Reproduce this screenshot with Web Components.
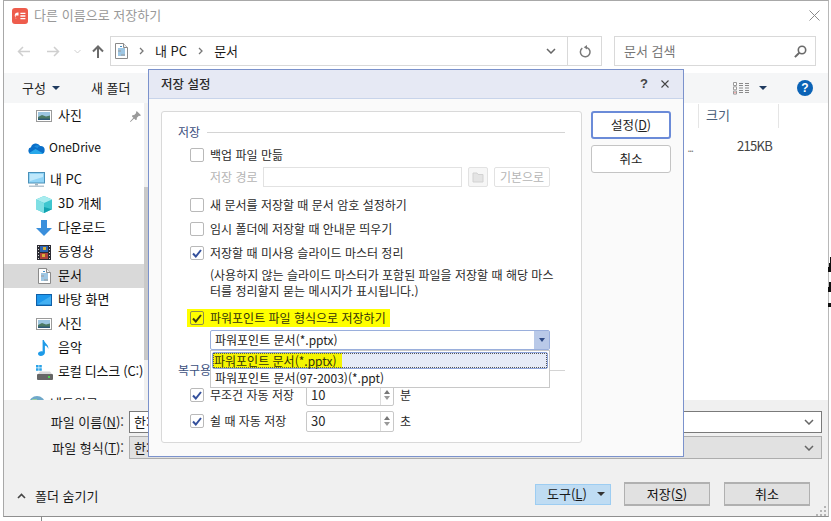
<!DOCTYPE html>
<html lang="ko">
<head>
<meta charset="utf-8">
<title>다른 이름으로 저장하기</title>
<style>
  html, body { margin: 0; padding: 0; background: #fff; overflow: hidden; }
  body { width: 831px; height: 521px; position: relative; font-family: "Noto Sans CJK KR", "Noto Sans", sans-serif; color: #1a1a1a; }
</style>
</head>
<body>
<desk-top>
  <file-window>
    <title-bar slot="title">다른 이름으로 저장하기</title-bar>
    <address-bar slot="address"></address-bar>
    <tool-bar slot="tools"></tool-bar>
    <nav-pane slot="nav">
      <nav-item icon="picture" pin>사진</nav-item>
      <nav-item icon="cloud" root gap style="font-size:12px;gap:4px">OneDrive</nav-item>
      <nav-item icon="pc" root gap>내 PC</nav-item>
      <nav-item icon="cube">3D 개체</nav-item>
      <nav-item icon="down">다운로드</nav-item>
      <nav-item icon="film">동영상</nav-item>
      <nav-item icon="doc" selected>문서</nav-item>
      <nav-item icon="desktop">바탕 화면</nav-item>
      <nav-item icon="picture">사진</nav-item>
      <nav-item icon="music">음악</nav-item>
      <nav-item icon="disk" style="letter-spacing:-.25px">로컬 디스크 (C:)</nav-item>
      <nav-item icon="globe" root gap>네트워크</nav-item>
    </nav-pane>
    <file-list slot="files"></file-list>
    <file-footer slot="footer"></file-footer>
    <save-dialog slot="dialog"></save-dialog>
  </file-window>
</desk-top>

<script>
const ICONS = {
  app: '<svg width="16" height="16" viewBox="0 0 16 16"><rect width="16" height="16" rx="3" fill="#ee5c4c"/><path d="M6.5 4.6A3 3 0 1 0 6.5 10.4H3.6V7.5H6.5z" fill="#fff"/><path d="M8.4 5.4h5M8.4 8h5M8.4 10.6h5" stroke="#fff" stroke-width="1.3"/></svg>',
  picture: '<svg width="16" height="13" viewBox="0 0 16 13"><rect x=".5" y=".5" width="15" height="11" fill="#fff" stroke="#9a9a9a"/><rect x="2" y="2" width="12" height="8" fill="#9cc6e0"/><path d="M2 7l4-2 4 1.5 4-1V10H2z" fill="#4c7a63"/><path d="M2 8.5h12V10H2z" fill="#2e5a78"/></svg>',
  cloud: '<svg width="17" height="12" viewBox="0 0 17 12"><path d="M3.6 12A3.4 3.4 0 0 1 3 5.3 4.9 4.9 0 0 1 12.1 4 3.9 3.9 0 0 1 16.6 8.5 3.4 3.4 0 0 1 13.5 12z" fill="#0a6fc9"/><path d="M6.2 4.6A4.9 4.9 0 0 1 12.1 4 4 4 0 0 0 9.5 6.2z" fill="#1c8bdc"/><path d="M3.6 12A3.4 3.4 0 0 1 1.2 11L7.5 7l7.8 4.6a3 3 0 0 1-1.8.4z" fill="#28a8ea"/></svg>',
  pc: '<svg width="17" height="16" viewBox="0 0 17 16"><rect x=".5" y=".5" width="16" height="10.5" fill="#8fd3f6" stroke="#4a90b8"/><path d="M2 2h13v3L2 9z" fill="#bfe8fb"/><rect x="7" y="11.5" width="3" height="2" fill="#9fb4c0"/><rect x="1" y="13.5" width="15" height="1.5" fill="#b4c4cf"/></svg>',
  cube: '<svg width="16" height="17" viewBox="0 0 16 17"><path d="M8 0l8 3.6v9.6L8 17 0 13.2V3.6z" fill="#3ec6cf"/><path d="M8 0l8 3.6L8 7 0 3.6z" fill="#a8ecef"/><path d="M0 3.6L8 7v10L0 13.2z" fill="#7fdfe4"/><path d="M8 11l8 2.2L8 17z" fill="#12a3b0"/></svg>',
  down: '<svg width="16" height="16" viewBox="0 0 16 16"><path d="M5 0h6v8h5l-8 8-8-8h5z" fill="#3a8fdc"/></svg>',
  film: '<svg width="14" height="15" viewBox="0 0 14 15"><rect width="14" height="15" fill="#2b2b33"/><rect x="3" y="1" width="8" height="6" fill="#2e64b0"/><rect x="3" y="8" width="8" height="6" fill="#b0443c"/><rect x="6" y="2" width="3" height="3" fill="#d8b23c"/><rect x="5" y="9" width="3" height="3" fill="#d8b23c"/><path d="M1 1.5h1M1 4.5h1M1 7.5h1M1 10.5h1M1 13.5h1M12 1.5h1M12 4.5h1M12 7.5h1M12 10.5h1M12 13.5h1" stroke="#ddd"/></svg>',
  doc: '<svg width="13" height="16" viewBox="0 0 13 16"><path d="M.5.5h8l4 4v11H.5z" fill="#fff" stroke="#8a8a8a"/><path d="M8.5.5v4h4" fill="#eee" stroke="#8a8a8a"/><path d="M5 3.5h2M3 6h7M3 8h7M3 10h7M3 12h7" stroke="#3f8fc9"/><path d="M3 8h3M6 12h4" stroke="#999"/></svg>',
  desktop: '<svg width="16" height="12" viewBox="0 0 16 12"><rect width="16" height="12" fill="#0f5fa8"/><rect x="1" y="1" width="14" height="9.4" fill="#1e98ec"/><path d="M1 10.4L15 2v8.4z" fill="#44b0f2"/></svg>',
  music: '<svg width="12" height="16" viewBox="0 0 12 16"><path d="M4.6 0h1.3c.3 3 5 4.400 4.400 9-.5-2.200-2-3.300-3.400-3.600v7.400C6.900 14.800 4.800 16 2.800 16 1 16 0 15 0 13.800c0-1.600 2.300-3 4.600-2.400z" fill="#1e9be8"/></svg>',
  disk: '<svg width="17" height="15" viewBox="0 0 17 15"><path d="M0 0h2.600v2.600H0zM3.200 0h2.600v2.600H3.200zM0 3.200h2.600v2.600H0zM3.200 3.200h2.600v2.600H3.200z" fill="#2aa3e8"/><path d="M2 9l2-2.500h10L16 9z" fill="#d8d8d8"/><rect x="1" y="9" width="16" height="6" rx="1" fill="#666"/><rect x="12" y="11" width="2" height="2" fill="#4ed04e"/></svg>',
  globe: '<svg width="16" height="16" viewBox="0 0 16 16"><circle cx="8" cy="8" r="8" fill="#6fa8c9"/><path d="M3 3h5v4H4z" fill="#9ad0a0"/></svg>',
  pin: '<svg width="11" height="11" viewBox="0 0 11 11"><path d="M6.700 0L11 4.300 9.800 5 8.900 4.800 6.900 6.800 6.700 8.700 5.600 9 2 5.400 2.300 4.300 4.200 4.100 6.200 2.100 6 1.200zM3.400 6.800L4.200 7.600 .8 10.800 0 11 .2 10.200z" fill="#9a9a9a"/></svg>',
  left: '<svg width="13" height="11" viewBox="0 0 13 11"><path d="M13 5.500H1.500M6 1L1.500 5.500 6 10" fill="none" stroke="#cfcfcf" stroke-width="1.500"/></svg>',
  right: '<svg width="13" height="11" viewBox="0 0 13 11"><path d="M0 5.500h11.500M7 1l4.500 4.500L7 10" fill="none" stroke="#cfcfcf" stroke-width="1.500"/></svg>',
  up: '<svg width="12" height="13" viewBox="0 0 12 13"><path d="M6 13V1.500M1 6.500l5-5 5 5" fill="none" stroke="#6a6a6a" stroke-width="2"/></svg>',
  chev: '<svg width="7" height="5" viewBox="0 0 7 5"><path d="M.5 1l3 3 3-3" fill="none" stroke="#cfcfcf"/></svg>',
  crumb: '<svg width="5" height="8" viewBox="0 0 5 8"><path d="M1 1l3 3-3 3" fill="none" stroke="#777" stroke-width="1.300"/></svg>',
  drop: '<svg width="10" height="6" viewBox="0 0 10 6"><path d="M1 1l4 4 4-4" fill="none" stroke="#666" stroke-width="1.500"/></svg>',
  refresh: '<svg width="12" height="13" viewBox="0 0 12 13"><path d="M3.300 3.200A4.800 4.800 0 1 0 8 2.600" fill="none" stroke="#7a7a7a" stroke-width="1.500"/><path d="M8 0v4.600L4.800 2.300z" fill="#7a7a7a"/></svg>',
  search: '<svg width="13" height="13" viewBox="0 0 13 13"><circle cx="8" cy="5" r="3.700" fill="none" stroke="#6a6a6a" stroke-width="1.600"/><path d="M5.300 7.700L.9 12.100" stroke="#6a6a6a" stroke-width="2"/></svg>',
  view: '<svg width="17" height="13" viewBox="0 0 17 13"><path d="M.5.500h3v3h-3zM.5 4.800h3v3h-3zM.5 9.100h3v3h-3z" fill="#fff" stroke="#9a9a9a"/><rect x="1.500" y="10.200" width="1" height="1" fill="#d33"/><path d="M6 1.500h4M12 1.500h4M6 3.500h4M12 3.500h4M6 6h4M12 6h4M6 8.500h4M12 8.500h4M6 10.500h4M12 10.500h4" stroke="#8a8a8a"/></svg>',
  caret: '<svg width="8" height="4" viewBox="0 0 8 4"><path d="M0 0h8L4 4z" fill="#1f3a5f"/></svg>',
  caretDark: '<svg width="8" height="4" viewBox="0 0 8 4"><path d="M0 0h8L4 4z" fill="#333"/></svg>',
  chevUp: '<svg width="9" height="6" viewBox="0 0 9 6"><path d="M1 5l3.500-3.500L8 5" fill="none" stroke="#444" stroke-width="1.600"/></svg>',
  close: '<svg width="11" height="11" viewBox="0 0 11 11"><path d="M.5.500l10 10M10.500.500l-10 10" stroke="#8a8a8a"/></svg>',
  closeSm: '<svg width="8" height="8" viewBox="0 0 8 8"><path d="M.5.500l7 7M7.500.500l-7 7" stroke="#444" stroke-width="1.100"/></svg>',
  folder: '<svg width="12" height="12" viewBox="0 0 12 12"><path d="M1 2h4l1 1.500h5V11H1z" fill="#e4e4e4" stroke="#d2d2d2"/></svg>',
  grip: '<svg width="10" height="10" viewBox="0 0 10 10"><path d="M8 0h2v2H8zM4 4h2v2H4zM8 4h2v2H8zM0 8h2v2H0zM4 8h2v2H4zM8 8h2v2H8z" fill="#b5b5b5"/></svg>',
};

// small helper: one template per element, cloned into an open shadow root
function define(name, css, html, setup) {
  const tpl = document.createElement('template');
  tpl.innerHTML = `<style>${css}</style>${html}`;
  customElements.define(name, class extends HTMLElement {
    constructor() {
      super();
      this.attachShadow({ mode: 'open' }).appendChild(tpl.content.cloneNode(true));
    }
    connectedCallback() {
      if (setup) setup(this, this.shadowRoot);
    }
  });
}

define('win-icon', ':host{display:inline-flex;line-height:0;flex:none}', '', (el, root) => {
  const box = document.createElement('span');
  box.style.display = 'inline-flex';
  box.innerHTML = ICONS[el.getAttribute('name')] || '';
  root.appendChild(box);
});

define('desk-top', `
  :host{display:block;width:831px;height:521px;position:relative;overflow:hidden;background:#fff}
  .line{position:absolute;left:41px;top:516px;width:1px;height:5px;background:#8a8a8a}
  .mark{position:absolute;left:828px;width:3px;background:#111}
`, `
  <slot></slot>
  <div class="line"></div>
  <div class="mark" style="top:257px;height:6px;left:830px;width:1px"></div>
  <div class="mark" style="top:263px;height:4px;left:829px;width:2px"></div>
  <div class="mark" style="top:267px;height:5px"></div>
  <div class="mark" style="top:282px;height:5px;left:829px;width:2px"></div>
  <div class="mark" style="top:287px;height:5px"></div>
  <div class="mark" style="top:303px;height:4px"></div>
`);

define('file-window', `
  :host{display:flex;flex-direction:column;box-sizing:border-box;position:absolute;left:3px;top:0;width:826px;height:517px;
    background:#fff;border:1px solid #a8a8a8;border-bottom:1px solid #8f8f8f;border-right:1px solid #b8b8b8;font-size:13px;line-height:18px;color:#1a1a1a}
  .body{flex:none;height:297px;display:flex}
  .dlg{position:absolute;left:144px;top:68px;z-index:5}
`, `
  <slot name="title"></slot>
  <slot name="address"></slot>
  <slot name="tools"></slot>
  <div class="body"><slot name="nav"></slot><slot name="files"></slot></div>
  <slot name="footer"></slot>
  <div class="dlg"><slot name="dialog"></slot></div>
`);

define('title-bar', `
  :host{display:flex;align-items:center;height:35px;box-sizing:border-box;padding:0 0 6px 8px;gap:6px;color:#999;letter-spacing:.04px}
  span{position:relative;top:-1px}
  .x{margin-left:auto;margin-right:8px}
`, `<win-icon name="app"></win-icon><span><slot></slot></span><win-icon class="x" name="close"></win-icon>`);

define('address-bar', `
  :host{display:flex;align-items:center;height:30px;padding:0 12px 0 13px;flex:none}
  .nav{display:flex;align-items:center;width:93px;flex:none}
  .box{display:flex;align-items:center;box-sizing:border-box;height:30px;border:1px solid #d9d9d9}
  .path{width:492px;padding-left:4px}
  .path .i{margin-right:11px}
  .txt{margin:0 11px}
  .end{margin-left:auto;display:flex;align-items:center;height:28px}
  .end span{display:flex;align-items:center;justify-content:center}
  .dd{width:33px}
  .rf{width:33px;height:28px;border-left:1px solid #d9d9d9}
  .search{width:202px;margin-left:12px;padding:0 8px 0 9px;color:#777}
  .search win-icon{margin-left:auto}
`, `
  <div class="nav">
    <win-icon name="left"></win-icon>
    <win-icon name="right" style="margin-left:17px"></win-icon>
    <win-icon name="chev" style="margin-left:14px"></win-icon>
    <win-icon name="up" style="margin-left:11px"></win-icon>
  </div>
  <div class="box path">
    <win-icon class="i" name="doc"></win-icon>
    <win-icon name="crumb"></win-icon><span class="txt">내 PC</span>
    <win-icon name="crumb"></win-icon><span class="txt">문서</span>
    <div class="end"><span class="dd"><win-icon name="drop"></win-icon></span><span class="rf"><win-icon name="refresh"></win-icon></span></div>
  </div>
  <div class="box search"><span>문서 검색</span><win-icon name="search"></win-icon></div>
`);

define('tool-bar', `
  :host{display:flex;align-items:center;height:30px;margin-top:7px;background:#f5f6f7;padding:0 15px 0 18px;flex:none;color:#222}
  .org{display:inline-flex;align-items:center;gap:6px;width:69px}
  .r{margin-left:auto;display:flex;align-items:center}
  .help{box-sizing:border-box;width:16px;height:16px;border-radius:50%;background:#0b63b6;color:#fff;font:bold 12px/16px "Liberation Sans",sans-serif;text-align:center;margin-left:30px}
`, `
  <span class="org">구성 <win-icon name="caret"></win-icon></span>
  <span>새 폴더</span>
  <div class="r">
    <win-icon name="view" style="margin-left:1px"></win-icon>
    <win-icon name="caret" style="margin-left:9px"></win-icon>
    <span class="help">?</span>
  </div>
`);

define('nav-pane', `
  :host{display:block;position:relative;flex:none;width:144px;height:297px;overflow:hidden;background:#fff}
  .list{width:140px;padding-top:1px}
  .bar{position:absolute;right:0;top:0;bottom:0;width:4px;background:#f0f0f0}
  .bar i{display:block;margin-top:84px;height:173px;background:#c9c9c9}
`, `<div class="list"><slot></slot></div><div class="bar"><i></i></div>`);

define('nav-item', `
  :host{display:flex;align-items:center;height:24px;box-sizing:border-box;padding-left:32px;gap:6px;white-space:nowrap;color:#111;position:relative}
  :host([root]){padding-left:24px;gap:5px}
  :host([gap]){margin-top:8px}
  :host([selected]){background:#d9d9d9}
  .ic{width:16px;display:flex;justify-content:center;flex:none}
  :host([root]) .ic{width:17px}
  .t{position:relative;top:-1px}
  .pin{position:absolute;left:126px;top:7px;display:none}
  :host([pin]) .pin{display:flex}
`, `<span class="ic"></span><span class="t"><slot></slot></span><win-icon class="pin" name="pin"></win-icon>`, (el, root) => {
  const icon = document.createElement('win-icon');
  icon.setAttribute('name', el.getAttribute('icon'));
  root.querySelector('.ic').appendChild(icon);
});

define('file-list', `
  :host{display:block;flex:1;background:#fff;color:#444}
  .head{display:flex;justify-content:flex-end;height:24px;padding-top:1px;padding-right:49px}
  .col{box-sizing:border-box;width:81px;border:solid #e5e5e5;border-width:0 1px;padding:2px 0 0 7px;color:#4c607a}
  .row{display:flex;justify-content:flex-end;align-items:center;height:24px;margin-top:6px;padding-right:56px}
  .size{letter-spacing:-.7px}
  .dots{margin-right:44px;color:#777;letter-spacing:-1px;font-size:10px;position:relative;top:2px}
`, `
  <div class="head"><div class="col">크기</div></div>
  <div class="row"><span class="dots">...</span><span class="size">215KB</span></div>
`);

define('file-footer', `
  :host{display:flex;flex-direction:column;position:relative;flex:1;background:#f0f0f0;padding:11px 6px 10px 0;box-sizing:border-box}
  .grid{display:grid;grid-template-columns:120px 1fr;column-gap:5px;row-gap:3px;align-items:center}
  label{text-align:right;white-space:nowrap}
  u{text-underline-offset:1px}
  .in{box-sizing:border-box;height:22px;border:1px solid #7a7a7a;background:#fff;padding:0 0 0 4px;display:flex;align-items:center;justify-content:space-between}
  .in.sel{height:23px;background:#e1e1e1;border-color:#adadad}
  .in win-icon{margin-right:7px}
  .bottom{margin-top:auto;display:flex;align-items:center;padding:0 12px 0 13px}
  .hide{display:inline-flex;align-items:center;gap:9px;margin-top:4px}
  .btns{margin-left:auto;display:flex;align-items:center}
  button{font:inherit;color:#111;height:24px;width:86px;box-sizing:border-box;border:1px solid #adadad;background:#e1e1e1;padding:0;margin-left:14px;border-width:2px 1px 2px 1px;border-color:#b0b0b0}
  .tool{display:flex;align-items:center;box-sizing:border-box;height:21px;width:76px;background:#bfdcf3;border:1px solid #9dcdf2;padding-left:11px;margin-right:-1px}
  .tool win-icon{margin-left:auto;margin-right:5px}
  .grip{position:absolute;right:2px;bottom:0}
`, `
  <div class="grid">
    <label>파일 이름(<u>N</u>):</label><div class="in"><span>한:</span><win-icon name="drop"></win-icon></div>
    <label>파일 형식(<u>T</u>):</label><div class="in sel"><span>한:</span><win-icon name="drop"></win-icon></div>
  </div>
  <div class="bottom">
    <span class="hide"><win-icon name="chevUp"></win-icon>폴더 숨기기</span>
    <div class="btns">
      <div class="tool"><span>도구(<u>L</u>)</span><win-icon name="caretDark"></win-icon></div>
      <button>저장(<u>S</u>)</button>
      <button>취소</button>
    </div>
  </div>
  <win-icon class="grip" name="grip"></win-icon>
`);

define('dlg-button', `
  :host{display:flex;align-items:center;justify-content:center;box-sizing:border-box;width:80px;height:28px;border:1px solid #c4c4c4;border-radius:3px;background:#fff;color:#222}
  :host([primary]){border:2px solid #6b8bd8}
  u{text-underline-offset:1px}
`, `<slot></slot>`);

define('check-box', `
  :host{display:inline-flex;box-sizing:border-box;width:14px;height:14px;border:1px solid #b9b9b9;border-radius:2px;background:#fff;flex:none;align-items:center;justify-content:center}
  :host([clear]){background:transparent;border-color:#8f8f4a}
  svg{display:none}
  :host([checked]) svg{display:block}
  path{stroke:var(--check,#34509c)}
`, `<svg width="10" height="9" viewBox="0 0 10 9"><path d="M1 4.500l2.800 3L9 1" fill="none" stroke-width="2"/></svg>`);

define('check-row', `
  :host{display:flex;align-items:center;height:24px;gap:6px;padding-left:28px;white-space:nowrap;color:#2a2a2a}
  :host([mark]){height:18px;width:203px;margin:3px 0 3px 25px;padding-left:3px;box-sizing:border-box;background:#ffff00;color:#33330a;--check:#3b3b10}
`, `<check-box></check-box><span><slot></slot></span>`, (el, root) => {
  const box = root.querySelector('check-box');
  if (el.hasAttribute('checked')) box.setAttribute('checked', '');
  if (el.hasAttribute('mark')) box.setAttribute('clear', '');
});

define('group-head', `
  :host{display:flex;align-items:center;height:20px;gap:7px;padding-right:16px;color:#3c4f80;white-space:nowrap}
  i{flex:1;height:1px;background:#d4d4d4}
`, `<span><slot></slot></span><i></i>`);

define('spin-box', `
  :host{display:flex;align-items:center;box-sizing:border-box;width:88px;height:21px;border:1px solid #c8c8c8;border-radius:2px;background:#fff;padding-left:4px;font-size:13px}
  span{flex:1}
  .b{width:13px;height:100%;border-left:1px solid #dcdcdc;display:flex;flex-direction:column;align-items:center;justify-content:space-around;padding:3px 0;box-sizing:border-box}
  i{width:0;height:0;border:3px solid transparent}
  .u{border-bottom:4px solid #777;border-top:0}
  .d{border-top:4px solid #999;border-bottom:0}
`, `<span><slot></slot></span><div class="b"><i class="u"></i><i class="d"></i></div>`);

define('auto-row', `
  :host{display:flex;align-items:center;height:26px;padding-left:28px;color:#2a2a2a;white-space:nowrap}
  .t{display:flex;gap:6px;align-items:center;width:116px}
  .u{margin-left:6px}
`, `<span class="t"><check-box checked></check-box><slot name="label"></slot></span><slot name="box"></slot><span class="u"><slot name="unit"></slot></span>`);

define('type-select', `
  :host{display:flex;position:relative;box-sizing:border-box;width:340px;height:20px;margin-left:48px;border:1px solid #9aafdc;border-radius:2px;background:#fff;align-items:center;padding-left:4px;color:#222;white-space:nowrap}
  span{flex:1}
  .a{align-self:stretch;width:15px;background:#b9c9e8;display:flex;align-items:center;justify-content:center}
  .a i{border:3px solid transparent;border-top:4px solid #2e4a86;border-bottom:0}
`, `<span><slot></slot></span><div class="a"><i></i></div>`);

define('type-menu', `
  :host{display:block;position:absolute;left:48px;top:238px;width:340px;height:38px;box-sizing:border-box;background:#fff;border:1px solid #c8c8c8;padding:1px;z-index:3;white-space:nowrap;color:#222}
  .on{position:relative;box-sizing:border-box;height:17px;background:#e6ebf7;border:1px solid #8fa6dc;border-radius:2px;display:flex}
  .on::after{content:"";position:absolute;inset:0;border:1px dotted #555;pointer-events:none}
  .hl{display:block;width:129px;background:#f5f500;padding-left:1px;line-height:15px;color:#33330a;box-sizing:border-box}
  .off{padding-left:3px;line-height:15px;margin-top:1px}
`, `
  <div class="on"><span class="hl">파워포인트 문서(*.pptx)</span></div>
  <div class="off">파워포인트 문서(97-2003)(*.ppt)</div>
`);

define('settings-panel', `
  :host{display:block;position:relative;box-sizing:border-box;width:421px;height:332px;background:#fff;border:1px solid #d9d9d9;border-radius:3px;padding:10px 0 0 16px;font-size:12px;line-height:16px}
  .inner{margin-left:-16px}
  .head{padding-left:16px}
  .path{display:flex;align-items:center;height:20px;padding-left:48px;color:#b5b5b5;gap:6px}
  .path .lb{width:47px;white-space:nowrap}
  .path .field{box-sizing:border-box;width:199px;height:20px;border:1px solid #e2e2e2}
  .path .fb{box-sizing:border-box;width:20px;height:20px;border:1px solid #e2e2e2;border-radius:2px;display:flex;align-items:center;justify-content:center;background:#f6f6f6}
  .path .def{box-sizing:border-box;width:56px;height:20px;border:1px solid #e2e2e2;border-radius:2px;text-align:center;line-height:18px}
  .desc{padding-left:48px;line-height:16px;margin-top:2px;color:#2a2a2a;white-space:nowrap}
  .first{margin-top:1px}
  .mt6{margin-top:6px}
  .rec{margin-top:10px}
  .sel{margin-top:2px}
  .auto1{margin-top:2px}
`, `
  <div class="inner">
    <group-head class="head">저장</group-head>
    <check-row class="first">백업 파일 만듦</check-row>
    <div class="path"><span class="lb">저장 경로</span><span class="field"></span><span class="fb"><win-icon name="folder"></win-icon></span><span class="def">기본으로</span></div>
    <check-row class="mt6">새 문서를 저장할 때 문서 암호 설정하기</check-row>
    <check-row>임시 폴더에 저장할 때 안내문 띄우기</check-row>
    <check-row checked>저장할 때 미사용 슬라이드 마스터 정리</check-row>
    <div class="desc">(사용하지 않는 슬라이드 마스터가 포함된 파일을 저장할 때 해당 마스<br>터를 정리할지 묻는 메시지가 표시됩니다.)</div>
    <check-row checked mark style="margin-top:10px">파워포인트 파일 형식으로 저장하기</check-row>
    <type-select class="sel">파워포인트 문서(*.pptx)</type-select>
    <group-head class="head rec">복구용</group-head>
    <auto-row class="auto1"><span slot="label">무조건 자동 저장</span><spin-box slot="box">10</spin-box><span slot="unit">분</span></auto-row>
    <auto-row><span slot="label">쉴 때 자동 저장</span><spin-box slot="box">30</spin-box><span slot="unit">초</span></auto-row>
  </div>
  <type-menu></type-menu>
`);

define('save-dialog', `
  :host{display:flex;flex-direction:column;box-sizing:border-box;width:536px;height:388px;background:#fafafa;border:1px solid #7b92cc;color:#222}
  header{display:flex;align-items:center;box-sizing:border-box;height:29px;background:#e6e9f4;border-bottom:1px solid #c8d4ea;padding:0 14px 0 12px;font-size:12.500px;font-weight:500;color:#2a2a2a}
  .q{margin-left:auto;margin-right:13px;font:bold 13px/16px "Liberation Sans",sans-serif;color:#444}
  .main{display:flex;gap:9px;padding:12px 12px 0 12px}
  .btns{display:flex;flex-direction:column;gap:6px;font-size:12.500px}
`, `
  <header><span>저장 설정</span><span class="q">?</span><win-icon name="closeSm"></win-icon></header>
  <div class="main">
    <settings-panel></settings-panel>
    <div class="btns">
      <dlg-button primary>설정(<u>D</u>)</dlg-button>
      <dlg-button>취소</dlg-button>
    </div>
  </div>
`);
</script>
</body>
</html>
